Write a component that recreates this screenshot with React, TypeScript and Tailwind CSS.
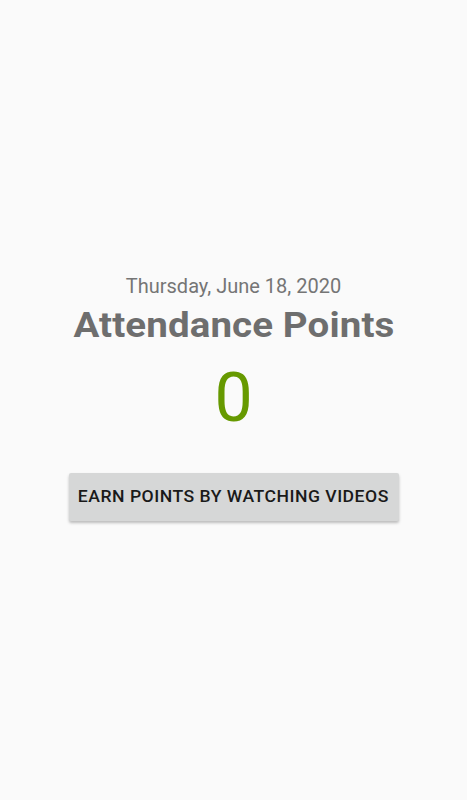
import React from "react";

export default function App() {
  return (
    <div
      className="w-[467px] h-[800px] bg-[#fafafa] flex flex-col items-center"
      style={{ fontFamily: "Roboto, 'Noto Sans', sans-serif" }}
    >
      <div className="h-[274px]" />
      <div className="text-[20px] leading-[24px] text-[#757575]">Thursday, June 18, 2020</div>
      <div className="mt-[8px] text-[35px] leading-[40px] font-bold text-[#6e6e6e] tracking-[0.1px] scale-x-110 whitespace-nowrap">
        Attendance Points
      </div>
      <div className="mt-[12px] text-[68px] leading-[80px] text-[#669900]">0</div>
      <button className="mt-[35px] w-[330px] h-[48px] bg-[#d6d7d7] rounded-[2px] shadow-[0_2px_3px_rgba(0,0,0,0.25)] flex items-center justify-center">
        <span className="inline-block scale-x-110 whitespace-nowrap text-[16px] leading-[20px] font-medium text-[#1a1a1a] tracking-[0.45px]">
          EARN POINTS BY WATCHING VIDEOS
        </span>
      </button>
    </div>
  );
}
